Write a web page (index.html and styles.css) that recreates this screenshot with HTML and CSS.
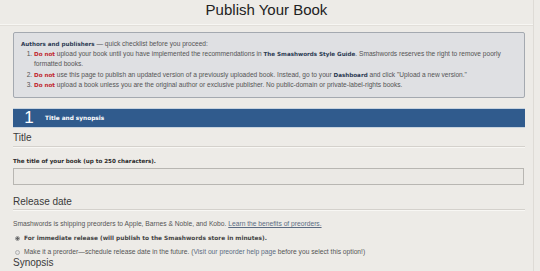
FILE: index.html
```html
<!DOCTYPE html>
<html lang="en">
<head>
<meta charset="UTF-8">
<title>Publish Your Book</title>
<link rel="stylesheet" href="styles.css">
</head>
<body>
<div class="page">
  <header class="page-head">
    <h1>Publish Your Book</h1>
  </header>

  <div class="main">
    <!-- checklist -->
    <div class="checklist">
      <p><b>Authors and publishers</b> — quick checklist before you proceed:</p>
      <ol>
        <li><span class="no">Do not</span> upload your book until you have implemented the recommendations in <b class="ref">The Smashwords Style Guide</b>. Smashwords reserves the right to remove poorly formatted books.</li>
        <li><span class="no">Do not</span> use this page to publish an updated version of a previously uploaded book. Instead, go to your <b class="ref">Dashboard</b> and click "Upload a new version."</li>
        <li><span class="no">Do not</span> upload a book unless you are the original author or exclusive publisher. No public-domain or private-label-rights books.</li>
      </ol>
    </div>

    <!-- step 1 -->
    <div class="step-bar">
      <span class="step-num">1</span>
      <span class="step-name">Title and synopsis</span>
    </div>

    <h2 class="field-head">Title</h2>
    <label class="field-label" for="bookTitle">The title of your book (up to 250 characters).</label>
    <input id="bookTitle" class="text-input" type="text">

    <h2 class="field-head">Release date</h2>
    <p class="note">Smashwords is shipping preorders to Apple, Barnes &amp; Noble, and Kobo. <a href="#">Learn the benefits of preorders.</a></p>
    <label class="option"><input type="radio" name="release" checked><span><b>For immediate release (will publish to the Smashwords store in minutes).</b></span></label>
    <label class="option"><input type="radio" name="release"><span>Make it a preorder—schedule release date in the future. (<a href="#" class="plain">Visit our preorder help page</a> before you select this option!)</span></label>

    <h2 class="field-head last">Synopsis</h2>
  </div>
</div>
</body>
</html>
```

FILE: styles.css
```css
/* ---------- GLOBAL ---------- */
html,body{margin:0;padding:0;background:#edebe7;color:#555;font-family:"Liberation Sans",Arial,sans-serif;}
a{color:#5b6b82;}
b{font-family:"DejaVu Sans",Verdana,sans-serif;font-weight:bold;}

.page{width:533px;border-right:1px solid #dedbd6;height:271px;overflow:hidden;}

/* ---------- HEADER ---------- */
.page-head{height:24px;border-bottom:1px solid #f7f6f3;box-shadow:0 1px 0 #e2dfda;}
.page-head h1{margin:0;padding-top:1px;text-align:center;font-size:15px;font-weight:normal;color:#222;line-height:17px;}

.main{padding:7px 8px 0 13px;}

/* ---------- CHECKLIST ---------- */
.checklist{background:#dfe0e3;border:1px solid #a4a9b0;border-radius:2px;padding:6px 10px 8px 7px;font-size:6.6px;line-height:9px;height:50px;}
.checklist p{margin:0;}
.checklist b{font-size:5.6px;color:#2b3a52;}
.checklist ol{margin:0;padding-left:13px;}
.checklist li:nth-child(2){margin-top:2px;}
.checklist .no{font-family:"DejaVu Sans",Verdana,sans-serif;font-weight:bold;font-size:5.6px;color:#c1272d;}
.checklist .ref{color:#2b3a52;}

/* ---------- STEP BAR ---------- */
.step-bar{margin-top:10px;height:18px;background:#305b8d;display:flex;align-items:center;color:#fff;border:1px solid #c8d3de;border-left:0;border-right:0;}
.step-num{width:32px;text-align:center;font-size:17px;line-height:18px;}
.step-name{font-family:"DejaVu Sans",Verdana,sans-serif;font-weight:bold;font-size:5.8px;}

/* ---------- FIELDS ---------- */
.field-head{margin:0;font-size:10px;font-weight:normal;color:#3a3a3a;line-height:12px;padding:4px 0 2px;border-bottom:1px solid #d4d1cc;box-shadow:0 1px 0 #f8f7f4;}
.field-label + .text-input + .field-head{padding:2px 0 1px;}
.field-head.last{border:0;box-shadow:none;padding:1px 0 0;}

.field-label{display:block;margin-top:10px;font-family:"DejaVu Sans",Verdana,sans-serif;font-weight:bold;font-size:5.6px;color:#2a2a2a;line-height:8px;}
.text-input{display:block;box-sizing:border-box;width:511px;height:17px;margin:3px 0 9px;border:1px solid #b8b6b2;background:#ebe9e5;padding:0;}

.note{margin:10px 0 0;font-size:6.7px;line-height:8px;}
.option{display:flex;align-items:center;margin-top:6px;font-size:6.7px;line-height:8px;}
.option b{font-size:5.85px;color:#444;}
.option input{appearance:none;-webkit-appearance:none;margin:0 4px 0 2px;width:5px;height:5px;border-radius:50%;border:1px solid #b0b0b0;background:#e4e4e4;box-sizing:border-box;}
.option input:checked{background:radial-gradient(circle,#666 0 1.2px,#e0e0e0 1.5px);border-color:#999;}
a.plain{color:#5b6b82;text-decoration:none;}
```
